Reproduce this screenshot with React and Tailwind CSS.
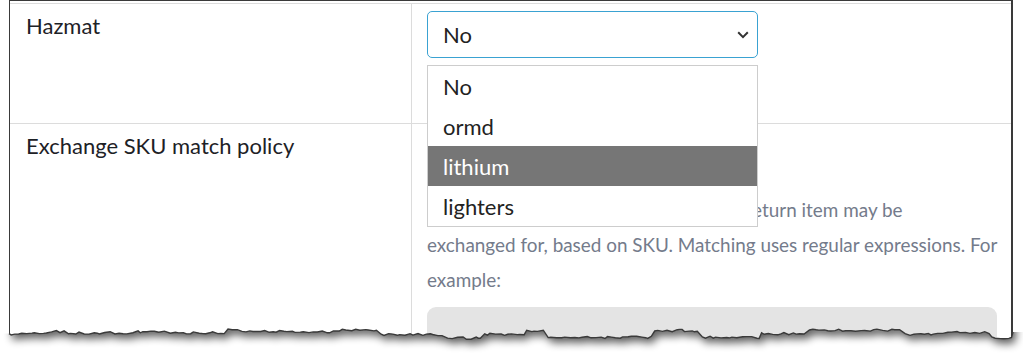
const OPTIONS = ['No', 'ormd', 'lithium', 'lighters']

// torn paper edge along the bottom of the frame
function rng(seed) {
  let s = seed
  return () => {
    s = (s * 16807) % 2147483647
    return (s - 1) / 2147483646
  }
}

function buildEdge() {
  const r = rng(11)
  const pts = []
  let x = 9
  while (x < 1013) {
    const end = Math.min(1013, x + 14 + r() * 55)
    const base = 10 + r() * 9
    while (x < end) {
      pts.push([x, base + (r() - 0.5) * 2.4])
      x += 2 + r() * 4
    }
  }
  pts.push([1013, 12])
  return pts
}

const EDGE = buildEdge()
const edgeLine = EDGE.map(([x, y], i) => `${i ? 'L' : 'M'}${x.toFixed(1)},${y.toFixed(1)}`).join(' ')
const paper = `M9,0 ${EDGE.map(([x, y]) => `L${x.toFixed(1)},${y.toFixed(1)}`).join(' ')} L1013,0 Z`
const below = `M0,${EDGE[0][1].toFixed(1)} ${EDGE.map(([x, y]) => `L${x.toFixed(1)},${y.toFixed(1)}`).join(' ')} L1023,${EDGE[EDGE.length - 1][1].toFixed(1)} L1023,40 L0,40 Z`

function TornEdge() {
  return (
    <svg className="absolute left-0 top-[320px]" width="1023" height="37" viewBox="0 0 1023 37">
      <defs>
        <filter id="blur" x="-5%" y="-50%" width="110%" height="200%">
          <feGaussianBlur stdDeviation="4" />
        </filter>
        <clipPath id="below">
          <path d={below} />
        </clipPath>
      </defs>
      <path d={below} fill="#fff" />
      <g clipPath="url(#below)">
        <path d={paper} transform="translate(3,5)" fill="#000" opacity="0.65" filter="url(#blur)" />
      </g>
      <path d={edgeLine} fill="none" stroke="#3a3a3a" strokeWidth="1.4" />
    </svg>
  )
}

export default function App() {
  return (
    <div className="relative w-[1023px] h-[357px] bg-white overflow-hidden font-['Lato',sans-serif]">
      {/* Frame */}
      <div className="ml-[9px] w-[1004px] h-[345px] border-l border-t border-r-2 border-[#3a3a3a] pt-[2px]">
        <div className="border-t border-[#dcdcdc] grid grid-cols-[402px_1fr] grid-rows-[120px_1fr] h-full">
          {/* Hazmat row */}
          <div className="border-r border-b border-[#dcdcdc] pl-[16px] pt-[9px]">
            <span className="text-[22px] leading-[26px] text-[#1d2126]">Hazmat</span>
          </div>
          <div className="border-b border-[#dcdcdc] pl-[15px] pt-[7px]">
            <div className="w-[331px] h-[47px] rounded-[5px] border border-[#3aa2d2] flex items-center justify-between pl-[15px] pr-[8px]">
              <span className="text-[22px] text-[#222]">No</span>
              <svg width="12" height="8" viewBox="0 0 12 8">
                <path d="M1.2 1.3l4.8 4.8 4.8-4.8" fill="none" stroke="#333" strokeWidth="2" />
              </svg>
            </div>
          </div>

          {/* Exchange row */}
          <div className="border-r border-[#dcdcdc] pl-[16px] pt-[9px]">
            <span className="text-[22px] leading-[26px] text-[#1d2126]">Exchange SKU match policy</span>
          </div>
          <div className="pl-[15px] pr-[10px] pt-[68px]">
            <p className="text-[18.9px] leading-[35px] text-[#747b8b]">
              Enter a list of SKU patterns, which the return item may be
              <br />
              exchanged for, based on SKU. Matching uses regular expressions. For example:
            </p>
            <div className="mt-[10px] mr-[4px] h-[60px] rounded-[9px] bg-[#e4e4e4]" />
          </div>
        </div>
      </div>

      {/* Open dropdown list */}
      <ul className="absolute left-[427px] top-[65px] w-[331px] border border-[#cdcdcd] bg-white">
        {OPTIONS.map(o => (
          <li
            key={o}
            className={`h-[40px] flex items-center pl-[15px] text-[22px] ${o === 'lithium' ? 'bg-[#767676] text-white' : 'text-[#222]'}`}
          >
            {o}
          </li>
        ))}
      </ul>

      <TornEdge />
    </div>
  )
}
